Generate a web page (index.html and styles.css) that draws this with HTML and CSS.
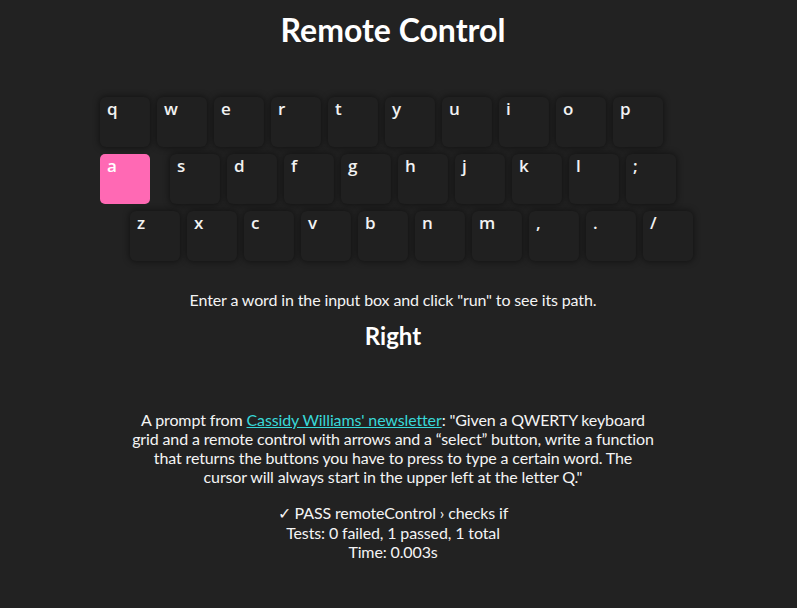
FILE: index.html
```html
<!DOCTYPE html>
<html lang="en">
<head>
<meta charset="utf-8">
<title>Remote Control</title>
<link rel="stylesheet" href="styles.css">
</head>
<body>
<main class="app">
  <h1 class="title">Remote Control</h1>
  <div class="keyboard">
    <div class="row row-top">
      <div class="key">q</div><div class="key">w</div><div class="key">e</div><div class="key">r</div><div class="key">t</div><div class="key">y</div><div class="key">u</div><div class="key">i</div><div class="key">o</div><div class="key">p</div>
    </div>
    <div class="row row-home">
      <div class="key key-active">a</div><div class="key">s</div><div class="key">d</div><div class="key">f</div><div class="key">g</div><div class="key">h</div><div class="key">j</div><div class="key">k</div><div class="key">l</div><div class="key">;</div>
    </div>
    <div class="row row-bottom">
      <div class="key">z</div><div class="key">x</div><div class="key">c</div><div class="key">v</div><div class="key">b</div><div class="key">n</div><div class="key">m</div><div class="key">,</div><div class="key">.</div><div class="key">/</div>
    </div>
  </div>
  <p class="hint">Enter a word in the input box and click "run" to see its path.</p>
  <h2 class="direction">Right</h2>
  <p class="prompt">A prompt from <a class="link" href="#">Cassidy Williams' newsletter</a>: "Given a QWERTY keyboard grid and a remote control with arrows and a “select” button, write a function that returns the buttons you have to press to type a certain word. The cursor will always start in the upper left at the letter Q."</p>
  <div class="tests">
    <div>✓ PASS remoteControl › checks if</div>
    <div>Tests: 0 failed, 1 passed, 1 total</div>
    <div>Time: 0.003s</div>
  </div>
</main>
</body>
</html>
```

FILE: styles.css
```css
html, body {
  margin: 0;
  padding: 0;
  background: #222222;
}

body {
  color: #f4f4f4;
  font-family: Lato, "Open Sans", sans-serif;
  font-size: 16px;
  letter-spacing: -0.13px;
}

.app {
  width: 786px;
  display: flex;
  flex-direction: column;
  align-items: center;
  text-align: center;
}

.title {
  margin: 11px 0 0;
  font-size: 32px;
  font-weight: 700;
  line-height: 38px;
  letter-spacing: 0;
  color: #ffffff;
}

.keyboard {
  align-self: stretch;
  margin-top: 48px;
  padding-left: 100px;
  display: flex;
  flex-direction: column;
  gap: 7px;
}

.row {
  display: flex;
  gap: 7px;
}

.row-bottom {
  padding-left: 30px;
}

.key {
  box-sizing: border-box;
  width: 50px;
  height: 50px;
  padding: 2px 7px;
  border-radius: 6px;
  background: #202020;
  box-shadow: 0 0 6px 1px rgba(0, 0, 0, 0.45);
  font-family: "Open Sans", sans-serif;
  font-weight: 600;
  font-size: 17px;
  line-height: 20px;
  letter-spacing: 0;
  color: #f2f2f2;
  text-align: left;
}

.key-active {
  background: hotpink;
  box-shadow: none;
  border-radius: 5px;
  margin-right: 13px;
  color: #ffffff;
}

.hint {
  margin: 29px 0 0;
  line-height: 20px;
}

.direction {
  margin: 11px 0 0;
  font-size: 24px;
  font-weight: 700;
  line-height: 30px;
  letter-spacing: 0;
  color: #ffffff;
}

.prompt {
  width: 524px;
  margin: 59px 0 0;
  line-height: 19px;
}

.link {
  color: #38d8d8;
  text-decoration: underline;
}

.tests {
  margin-top: 17px;
  line-height: 19.5px;
}
```
